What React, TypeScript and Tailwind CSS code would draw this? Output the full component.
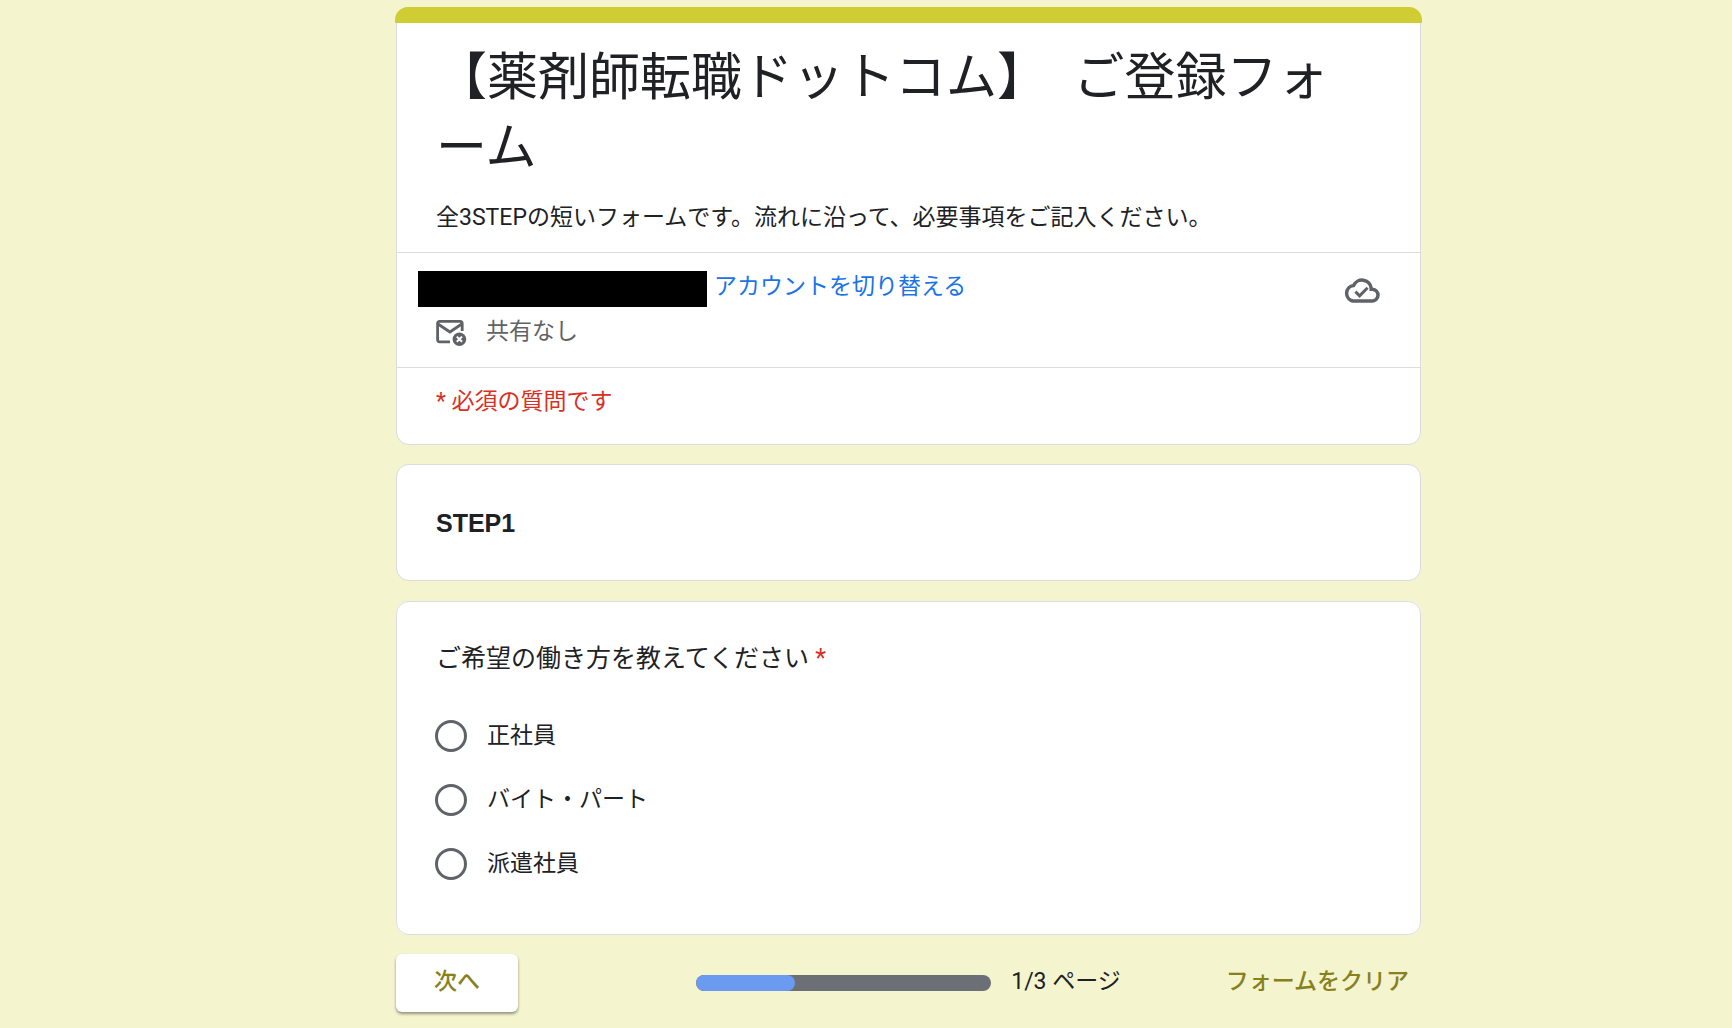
import { useState } from "react";

const OPTIONS = ["正社員", "バイト・パート", "派遣社員"];

function CloudDoneIcon() {
  return (
    <svg viewBox="0 0 36 28" className="h-7 w-9 shrink-0" fill="none" stroke="#5f6368" aria-label="保存済み" role="img">
      <path
        d="M9 25H27.8a5.9 5.9 0 0 0 0.6-11.8h-1.2v-1.2a9.3 9.3 0 0 0-17.6-2.6A7.9 7.9 0 0 0 9 25Z"
        strokeWidth="3.5"
      />
      <path d="M11.4 15.6l4.2 4.2 8-8" strokeWidth="3" />
    </svg>
  );
}

function MailOffIcon() {
  return (
    <svg viewBox="0 0 32 28" className="h-7 w-8 shrink-0" fill="none" stroke="#5f6368" aria-hidden="true">
      <path d="M15 23.8H4.4a1.8 1.8 0 0 1-1.8-1.8V5.2A1.8 1.8 0 0 1 4.4 3.4h21a1.8 1.8 0 0 1 1.8 1.8V13" strokeWidth="2.8" />
      <path d="M3 6l11.9 8L26.8 6" strokeWidth="2.8" />
      <circle cx="24.4" cy="21.2" r="6.8" fill="#5f6368" stroke="none" />
      <path d="M21.8 18.6l5.2 5.2M27 18.6l-5.2 5.2" stroke="#fff" strokeWidth="2" />
    </svg>
  );
}

export default function App() {
  const [choice, setChoice] = useState("");

  return (
    <div className="min-h-screen bg-[#f4f4cf] pt-[7px] pb-4 pl-[85px] font-[Roboto,'Noto_Sans_CJK_JP',sans-serif] text-[#202124]">
      <main className="mx-auto max-w-[1025px]">
        <form onSubmit={(e) => e.preventDefault()} onReset={() => setChoice("")}>
          <header className="relative rounded-[13px] border border-[#dadce0] bg-white pt-[35px] pb-6">
            <div className="absolute -inset-x-0.5 -top-px h-4 rounded-t-[13px] bg-[#cfcc34]" />
            <h1 className="pr-12 pl-[39px] text-[51px] leading-[70px]">【薬剤師転職ドットコム】　ご登録フォーム</h1>
            <p className="px-[39px] pt-[17px] pb-4 text-[23px] leading-9">
              全3STEPの短いフォームです。流れに沿って、必要事項をご記入ください。
            </p>
            <section className="flex items-start justify-between border-y border-[#dadce0] pt-4 pr-10 pb-[15px] pl-[21px] text-[23px]">
              <div>
                <div className="flex items-start gap-[7px]">
                  <div className="mt-0.5 h-9 w-[289px] bg-black" />
                  <a href="#account" className="leading-9 text-[#1a73e8]">
                    アカウントを切り替える
                  </a>
                </div>
                <div className="mt-[5px] flex items-center gap-[19px] pl-[17px] leading-10 text-[#5f6368]">
                  <MailOffIcon />
                  共有なし
                </div>
              </div>
              <div className="pt-[7px]">
                <CloudDoneIcon />
              </div>
            </section>
            <p className="px-[39px] pt-4 text-[23px] leading-9 text-[#d93025]">* 必須の質問です</p>
          </header>

          <section className="mt-[19px] rounded-[13px] border border-[#dadce0] bg-white px-[39px] pt-10 pb-[39px]">
            <h2 className="font-['Liberation_Sans',sans-serif] text-[25px] leading-9 font-bold">STEP1</h2>
          </section>

          <fieldset className="mt-5 rounded-[13px] border border-[#dadce0] bg-white px-[39px] pt-[39px] pb-[38px]">
            <legend className="float-left w-full text-[25px] leading-9">
              ご希望の働き方を教えてください <span className="text-[#d93025]">*</span>
            </legend>
            <div className="clear-both flex flex-col pt-[27px]">
              {OPTIONS.map((option) => (
                <label key={option} className="flex h-16 items-center gap-5 text-[23px]">
                  <input
                    type="radio"
                    name="workstyle"
                    checked={choice === option}
                    onChange={() => setChoice(option)}
                    className="-ml-px size-8 shrink-0 appearance-none rounded-full border-[3px] border-[#5f6368] checked:border-[10px]"
                  />
                  {option}
                </label>
              ))}
            </div>
          </fieldset>

          <div className="mt-[19px] grid grid-cols-[1fr_auto_1fr] items-center text-[23px]">
            <button
              type="submit"
              className="h-[58px] justify-self-start rounded-md bg-white px-[38px] pb-px font-medium text-[#87811d] shadow-[0_2px_3px_rgba(0,0,0,0.4)]"
            >
              次へ
            </button>
            <div className="flex items-center gap-5">
              <div className="h-4 w-[295px] overflow-hidden rounded-full bg-[#6c7076]">
                <div className="h-full w-1/3 rounded-full bg-[#6a9bf0]" />
              </div>
              <span className="pb-px">1/3 ページ</span>
            </div>
            <button type="reset" className="justify-self-end px-3 pb-px font-medium text-[#87811d]">
              フォームをクリア
            </button>
          </div>
        </form>
      </main>
    </div>
  );
}
